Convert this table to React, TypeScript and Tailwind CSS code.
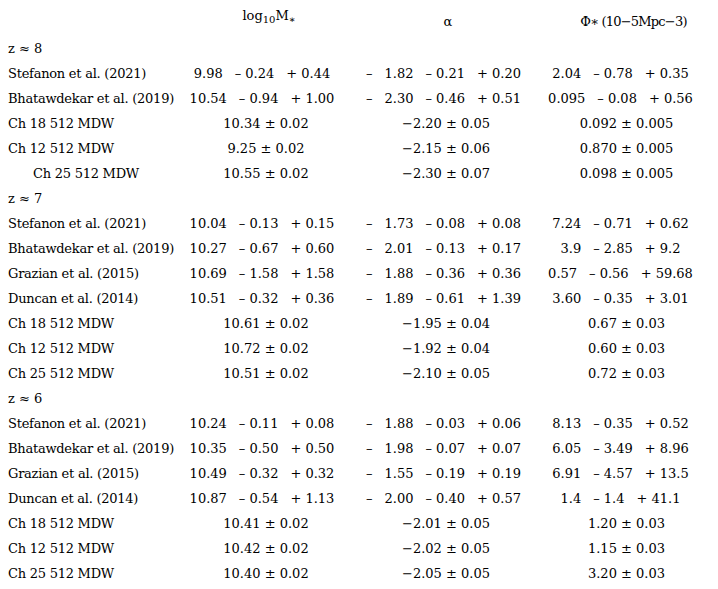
type Asym = [string, string, string];
type Cell = Asym | string;

interface Row {
  name: string;
  indent?: boolean;
  mass: Cell;
  alpha: Cell;
  phi: Cell;
}

interface Group {
  z: string;
  rows: Row[];
}

const groups: Group[] = [
  {
    z: '8',
    rows: [
      { name: 'Stefanon et al. (2021)', mass: ['9.98', '0.24', '0.44'], alpha: ['1.82', '0.21', '0.20'], phi: ['2.04', '0.78', '0.35'] },
      { name: 'Bhatawdekar et al. (2019)', mass: ['10.54', '0.94', '1.00'], alpha: ['2.30', '0.46', '0.51'], phi: ['0.095', '0.08', '0.56'] },
      { name: 'Ch 18 512 MDW', mass: '10.34 ± 0.02', alpha: '−2.20 ± 0.05', phi: '0.092 ± 0.005' },
      { name: 'Ch 12 512 MDW', mass: '9.25 ± 0.02', alpha: '−2.15 ± 0.06', phi: '0.870 ± 0.005' },
      { name: 'Ch 25 512 MDW', indent: true, mass: '10.55 ± 0.02', alpha: '−2.30 ± 0.07', phi: '0.098 ± 0.005' },
    ],
  },
  {
    z: '7',
    rows: [
      { name: 'Stefanon et al. (2021)', mass: ['10.04', '0.13', '0.15'], alpha: ['1.73', '0.08', '0.08'], phi: ['7.24', '0.71', '0.62'] },
      { name: 'Bhatawdekar et al. (2019)', mass: ['10.27', '0.67', '0.60'], alpha: ['2.01', '0.13', '0.17'], phi: ['3.9', '2.85', '9.2'] },
      { name: 'Grazian et al. (2015)', mass: ['10.69', '1.58', '1.58'], alpha: ['1.88', '0.36', '0.36'], phi: ['0.57', '0.56', '59.68'] },
      { name: 'Duncan et al. (2014)', mass: ['10.51', '0.32', '0.36'], alpha: ['1.89', '0.61', '1.39'], phi: ['3.60', '0.35', '3.01'] },
      { name: 'Ch 18 512 MDW', mass: '10.61 ± 0.02', alpha: '−1.95 ± 0.04', phi: '0.67 ± 0.03' },
      { name: 'Ch 12 512 MDW', mass: '10.72 ± 0.02', alpha: '−1.92 ± 0.04', phi: '0.60 ± 0.03' },
      { name: 'Ch 25 512 MDW', mass: '10.51 ± 0.02', alpha: '−2.10 ± 0.05', phi: '0.72 ± 0.03' },
    ],
  },
  {
    z: '6',
    rows: [
      { name: 'Stefanon et al. (2021)', mass: ['10.24', '0.11', '0.08'], alpha: ['1.88', '0.03', '0.06'], phi: ['8.13', '0.35', '0.52'] },
      { name: 'Bhatawdekar et al. (2019)', mass: ['10.35', '0.50', '0.50'], alpha: ['1.98', '0.07', '0.07'], phi: ['6.05', '3.49', '8.96'] },
      { name: 'Grazian et al. (2015)', mass: ['10.49', '0.32', '0.32'], alpha: ['1.55', '0.19', '0.19'], phi: ['6.91', '4.57', '13.5'] },
      { name: 'Duncan et al. (2014)', mass: ['10.87', '0.54', '1.13'], alpha: ['2.00', '0.40', '0.57'], phi: ['1.4', '1.4', '41.1'] },
      { name: 'Ch 18 512 MDW', mass: '10.41 ± 0.02', alpha: '−2.01 ± 0.05', phi: '1.20 ± 0.03' },
      { name: 'Ch 12 512 MDW', mass: '10.42 ± 0.02', alpha: '−2.02 ± 0.05', phi: '1.15 ± 0.03' },
      { name: 'Ch 25 512 MDW', mass: '10.40 ± 0.02', alpha: '−2.05 ± 0.05', phi: '3.20 ± 0.03' },
    ],
  },
];

function AsymCell({ v, neg }: { v: Asym; neg?: boolean }) {
  return (
    <div className="flex justify-center gap-[12px] whitespace-pre">
      {neg ? <span>–</span> : null}
      <span>{v[0]}</span>
      <span>{'– ' + v[1]}</span>
      <span>{'+ ' + v[2]}</span>
    </div>
  );
}

function ValueCell({ v, neg, sym, pad }: { v: Cell; neg?: boolean; sym: string; pad: string }) {
  if (typeof v === 'string') {
    return <div className={`text-center whitespace-pre ${sym}`}>{v}</div>;
  }
  return (
    <div className={pad}>
      <AsymCell v={v} neg={neg} />
    </div>
  );
}

export default function App() {
  return (
    <div
      className="w-[718px] min-h-[589px] bg-white text-black text-[13px]"
      style={{ fontFamily: '"DejaVu Serif", serif' }}
    >
      <div className="grid h-[36px] grid-cols-[178px_172px_185px_1fr] leading-[16px]">
        <div />
        <div className="pt-[8px] pl-[10px] text-center">
          log<sub className="text-[10px]">10</sub>M<sub className="text-[10px]">∗</sub>
        </div>
        <div className="pt-[14px] pl-[11px] text-center">α</div>
        <div className="pt-[14px] pl-[14px] text-center tracking-[-0.8px]">Φ∗ (10−5Mpc−3)</div>
      </div>
      {groups.map((g) => (
        <div key={g.z} className="leading-[25px]">
          <div className="pl-[8px]">z ≈ {g.z}</div>
          {g.rows.map((r, i) => (
            <div key={i} className="grid grid-cols-[178px_172px_185px_1fr]">
              <div
                className={`whitespace-nowrap tracking-[-0.25px] ${r.indent ? 'pl-[33px]' : 'pl-[8px]'}`}
              >
                {r.name}
              </div>
              <ValueCell v={r.mass} sym="pl-[4px]" pad="pr-[4px]" />
              <ValueCell v={r.alpha} neg sym="pl-[7px]" pad="pl-[2px]" />
              <ValueCell v={r.phi} sym="" pad="pr-[12px]" />
            </div>
          ))}
        </div>
      ))}
    </div>
  );
}
